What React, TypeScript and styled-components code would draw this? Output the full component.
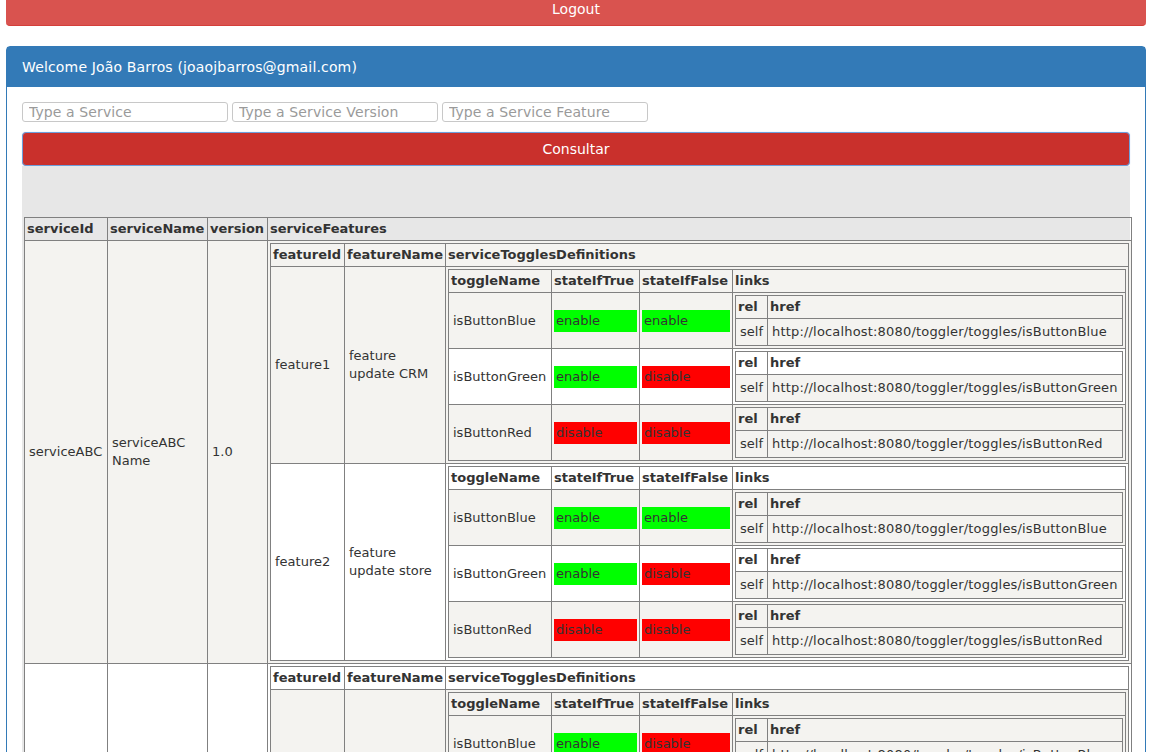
import React from "react";
import styled, { createGlobalStyle } from "styled-components";

const GlobalStyle = createGlobalStyle`
  html, body {
    margin: 0;
    padding: 0;
    overflow: hidden;
    background: #ffffff;
  }
  body {
    font-family: "DejaVu Sans", Verdana, sans-serif;
    color: #333333;
  }
  * { box-sizing: border-box; }
`;

const Page = styled.div`
  width: 1140px;
  margin-left: 6px;
`;

const LogoutButton = styled.button`
  display: block;
  width: 100%;
  height: 26px;
  padding: 0 0 7px;
  margin: 0;
  border: none;
  border-bottom: 1px solid #d43f3a;
  border-radius: 0 0 4px 4px;
  background: #d9534f;
  color: #ffffff;
  font-family: "DejaVu Sans", Verdana, sans-serif;
  font-size: 14px;
  line-height: 18px;
  text-align: center;
`;

const Panel = styled.section`
  margin-top: 20px;
  border: 1px solid #337ab7;
  border-radius: 4px 4px 0 0;
`;

const PanelHeading = styled.header`
  background: #337ab7;
  color: #ffffff;
  padding: 10px 15px;
  font-size: 14px;
  line-height: 20px;
  letter-spacing: 0.16px;
`;

const PanelBody = styled.div`
  padding: 15px;
`;

const SearchRow = styled.div`
  display: flex;
  gap: 4px;
`;

const SearchInput = styled.input`
  width: 206px;
  height: 20px;
  padding: 0 6px;
  border: 1px solid #c8c8c8;
  border-radius: 3px;
  font-family: "DejaVu Sans", Verdana, sans-serif;
  font-size: 14px;
  letter-spacing: 0.1px;
  line-height: 18px;
  color: #333333;
  background: #ffffff;
  &::placeholder {
    color: #9a9a9a;
  }
`;

const ConsultarButton = styled.button`
  display: block;
  width: 100%;
  height: 34px;
  margin-top: 10px;
  padding: 0;
  border: 1px solid #6c9fdc;
  border-radius: 4px;
  background: #c9302c;
  color: #ffffff;
  font-family: "DejaVu Sans", Verdana, sans-serif;
  font-size: 14px;
  line-height: 20px;
  box-shadow: 0 0 1px rgba(102, 150, 230, 0.6);
`;

const Well = styled.div`
  background: #e7e7e7;
  padding-top: 51px;
`;

const Table = styled.table<{ $root?: boolean }>`
  border-collapse: collapse;
  border: 1px solid #808080;
  width: ${(p) => (p.$root ? "1108px" : "100%")};
  margin-left: ${(p) => (p.$root ? "2px" : "0")};
  font-size: 13px;
  line-height: 18px;
  color: #333333;

  & > tbody > tr:nth-of-type(odd) {
    background: #f4f3f0;
  }
  & > tbody > tr:nth-of-type(even) {
    background: #ffffff;
  }
`;

const Th = styled.th<{ $w?: number }>`
  border: 1px solid #808080;
  padding: 2px;
  text-align: left;
  vertical-align: middle;
  font-weight: bold;
  white-space: nowrap;
  width: ${(p) => (p.$w ? `${p.$w}px` : "auto")};
`;

const Td = styled.td`
  border: 1px solid #808080;
  padding: 2px;
  text-align: left;
  vertical-align: middle;
`;

const Val = styled.div<{ $url?: boolean }>`
  padding: 2px;
  letter-spacing: ${(p) => (p.$url ? "0.18px" : "normal")};
  white-space: ${(p) => (p.$url ? "nowrap" : "normal")};
`;

const StateBar = styled.div<{ $on: boolean }>`
  padding: 2px;
  background: ${(p) => (p.$on ? "#00ff00" : "#ff0000")};
`;

type Toggle = { name: string; t: boolean; f: boolean };
type Feature = { id: string; name: string; toggles: Toggle[] };
type Service = { id: string; name: string; version: string; features: Feature[] };

const std: Toggle[] = [
  { name: "isButtonBlue", t: true, f: true },
  { name: "isButtonGreen", t: true, f: false },
  { name: "isButtonRed", t: false, f: false },
];

const services: Service[] = [
  {
    id: "serviceABC",
    name: "serviceABC Name",
    version: "1.0",
    features: [
      { id: "feature1", name: "feature update CRM", toggles: std },
      { id: "feature2", name: "feature update store", toggles: std },
    ],
  },
  {
    id: "serviceXYZ",
    name: "serviceXYZ Name",
    version: "1.0",
    features: [
      {
        id: "feature1",
        name: "feature update CRM",
        toggles: [
          { name: "isButtonBlue", t: true, f: false },
          { name: "isButtonGreen", t: false, f: true },
          { name: "isButtonRed", t: true, f: true },
        ],
      },
    ],
  },
];

const BASE = "http://localhost:8080/toggler/toggles/";

function LinksTable({ name }: { name: string }) {
  return (
    <Table>
      <thead>
        <tr>
          <Th $w={32}>rel</Th>
          <Th>href</Th>
        </tr>
      </thead>
      <tbody>
        <tr>
          <Td>
            <Val>self</Val>
          </Td>
          <Td>
            <Val $url>{BASE + name}</Val>
          </Td>
        </tr>
      </tbody>
    </Table>
  );
}

function TogglesTable({ toggles }: { toggles: Toggle[] }) {
  return (
    <Table>
      <thead>
        <tr>
          <Th $w={103}>toggleName</Th>
          <Th $w={88}>stateIfTrue</Th>
          <Th $w={93}>stateIfFalse</Th>
          <Th>links</Th>
        </tr>
      </thead>
      <tbody>
        {toggles.map((tg) => (
          <tr key={tg.name}>
            <Td>
              <Val>{tg.name}</Val>
            </Td>
            <Td>
              <StateBar $on={tg.t}>{tg.t ? "enable" : "disable"}</StateBar>
            </Td>
            <Td>
              <StateBar $on={tg.f}>{tg.f ? "enable" : "disable"}</StateBar>
            </Td>
            <Td>
              <LinksTable name={tg.name} />
            </Td>
          </tr>
        ))}
      </tbody>
    </Table>
  );
}

function FeaturesTable({ features }: { features: Feature[] }) {
  return (
    <Table>
      <thead>
        <tr>
          <Th $w={74}>featureId</Th>
          <Th $w={101}>featureName</Th>
          <Th>serviceTogglesDefinitions</Th>
        </tr>
      </thead>
      <tbody>
        {features.map((f) => (
          <tr key={f.id}>
            <Td>
              <Val>{f.id}</Val>
            </Td>
            <Td>
              <Val>{f.name}</Val>
            </Td>
            <Td>
              <TogglesTable toggles={f.toggles} />
            </Td>
          </tr>
        ))}
      </tbody>
    </Table>
  );
}

export default function App() {
  return (
    <>
      <GlobalStyle />
      <Page>
        <LogoutButton>Logout</LogoutButton>
        <Panel>
          <PanelHeading>Welcome João Barros (joaojbarros@gmail.com)</PanelHeading>
          <PanelBody>
            <SearchRow>
              <SearchInput placeholder="Type a Service" />
              <SearchInput placeholder="Type a Service Version" />
              <SearchInput placeholder="Type a Service Feature" />
            </SearchRow>
            <ConsultarButton>Consultar</ConsultarButton>
            <Well>
              <Table $root>
                <thead>
                  <tr>
                    <Th $w={83}>serviceId</Th>
                    <Th $w={100}>serviceName</Th>
                    <Th $w={60}>version</Th>
                    <Th>serviceFeatures</Th>
                  </tr>
                </thead>
                <tbody>
                  {services.map((s) => (
                    <tr key={s.id}>
                      <Td>
                        <Val>{s.id}</Val>
                      </Td>
                      <Td>
                        <Val>{s.name}</Val>
                      </Td>
                      <Td>
                        <Val>{s.version}</Val>
                      </Td>
                      <Td>
                        <FeaturesTable features={s.features} />
                      </Td>
                    </tr>
                  ))}
                </tbody>
              </Table>
            </Well>
          </PanelBody>
        </Panel>
      </Page>
    </>
  );
}
